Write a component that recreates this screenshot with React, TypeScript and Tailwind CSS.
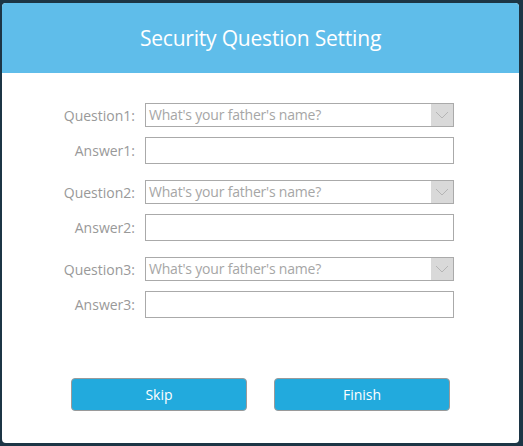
import React, { FC } from "react";

const FONT = { fontFamily: '"Open Sans", "Noto Sans", sans-serif' };

const QuestionSelect: FC<{ value: string }> = ({ value }) => (
  <div className="flex h-[24px] w-[309px] border border-[#aaaaaa] bg-white">
    <div className="flex-1 pl-[3px] text-[14px] leading-[22px] text-[#a6a6a6] tracking-[-0.2px] whitespace-nowrap overflow-hidden">
      {value}
    </div>
    <div className="flex w-[22px] items-center justify-center bg-[#d9d9d9]">
      <svg width="14" height="8" viewBox="0 0 14 8" fill="none">
        <path d="M1 1 L7 7 L13 1" stroke="#b5b5b5" strokeWidth="1" />
      </svg>
    </div>
  </div>
);

const Row: FC<{ label: string; children: React.ReactNode }> = ({ label, children }) => (
  <div className="flex items-center gap-[10px]">
    <label className="w-[133px] text-right text-[14px] text-[#999999]">{label}</label>
    {children}
  </div>
);

const App: FC = () => {
  const questions = [1, 2, 3];
  return (
    <div className="h-[446px] w-[523px] bg-[#1c3545] pt-[3px] pl-[2px]" style={FONT}>
      <div className="flex h-[440px] w-[517px] flex-col overflow-hidden rounded-[4px] bg-white">
        <div className="flex h-[70px] items-center justify-center bg-[#5fbdea] pt-[2px]">
          <h1 className="text-[21px] text-white tracking-[-0.2px]">Security Question Setting</h1>
        </div>
        <form className="flex flex-col pt-[30px]">
          {questions.map((n) => (
            <div key={n} className="mb-[16px] flex flex-col gap-[10px]">
              <Row label={`Question${n}:`}>
                <QuestionSelect value="What's your father's name?" />
              </Row>
              <Row label={`Answer${n}:`}>
                <input type="text" className="h-[27px] w-[309px] border border-[#aaaaaa] bg-white outline-none" />
              </Row>
            </div>
          ))}
          <div className="mt-[44px] flex gap-[27px] pl-[69px]">
            <button type="button" className="h-[33px] w-[176px] rounded-[4px] border border-[#9a9a9a] bg-[#22aadd] text-[14px] text-white">
              Skip
            </button>
            <button type="button" className="h-[33px] w-[176px] rounded-[4px] border border-[#9a9a9a] bg-[#22aadd] text-[14px] text-white">
              Finish
            </button>
          </div>
        </form>
      </div>
    </div>
  );
};

export default App;
